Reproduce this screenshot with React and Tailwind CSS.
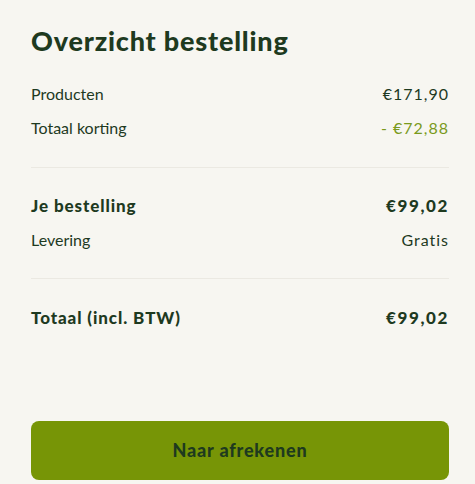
import React from 'react';

const rows = {
  first: [
    { label: 'Producten', value: '€171,90' },
    { label: 'Totaal korting', value: '- €72,88', discount: true },
  ],
};

const Row = ({ label, value, bold, discount }) => (
  <div className={`flex items-center justify-between ${bold ? 'text-[17px] font-black tracking-[0.9px]' : ''}`}>
    <span>{label}</span>
    <span className={`${bold ? 'tracking-[1.6px]' : 'tracking-[1px]'} ${discount ? 'text-[#7a9a1c]' : ''}`}>{value}</span>
  </div>
);

export default function App() {
  return (
    <div
      className="min-h-[484px] bg-[#f7f6f1] pl-[31px] pr-[26px] pt-[25px] text-[#1e3a1f] flex flex-col"
      style={{ fontFamily: 'Lato, "Open Sans", sans-serif' }}
    >
      <h1 className="text-[27px] font-black leading-[32px] tracking-[0.8px]">Overzicht bestelling</h1>

      {/* producten + korting */}
      <div className="mt-[27px] flex flex-col gap-[14px] text-[16px] leading-[20px]">
        {rows.first.map((r) => (
          <Row key={r.label} {...r} />
        ))}
      </div>

      <div className="mt-[29px] border-t border-[#ebe9e2]" />

      {/* bestelling + levering */}
      <div className="mt-[28px] flex flex-col gap-[14px] text-[16px] leading-[20px]">
        <Row label="Je bestelling" value="€99,02" bold />
        <Row label="Levering" value="Gratis" />
      </div>

      <div className="mt-[28px] border-t border-[#ebe9e2]" />

      <div className="mt-[29px] text-[16px] leading-[20px]">
        <Row label="Totaal (incl. BTW)" value="€99,02" bold />
      </div>

      <button className="mt-[93px] h-[59px] w-full rounded-[8px] bg-[#779506] text-[18px] font-black tracking-[0.8px] text-[#1e3a1f]">
        Naar afrekenen
      </button>
    </div>
  );
}
